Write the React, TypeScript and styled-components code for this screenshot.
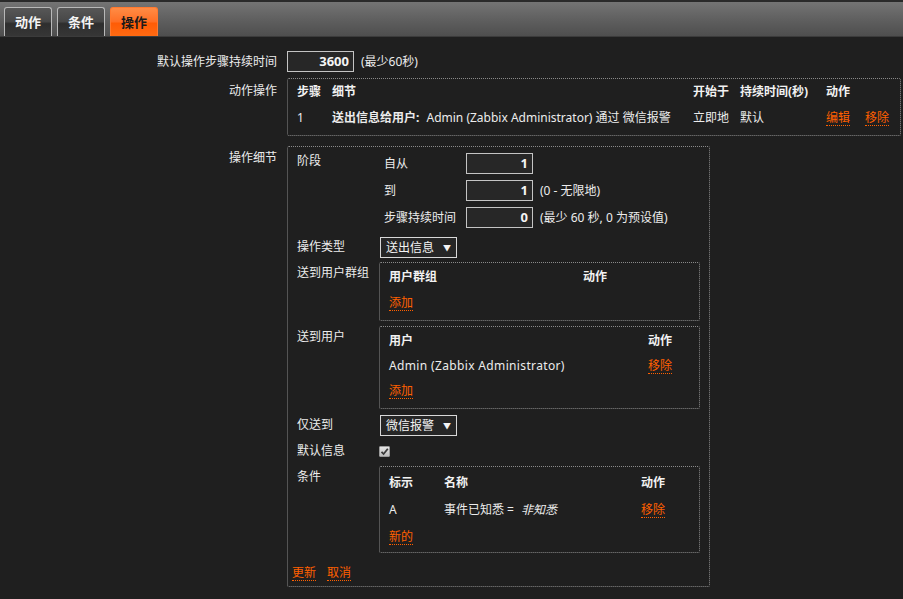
import React from 'react';
import styled, { createGlobalStyle } from 'styled-components';

const GlobalStyle = createGlobalStyle`
    html, body {
        margin: 0;
        padding: 0;
        background: #1f1f1f;
    }
    body {
        font-family: "Noto Sans", "Noto Sans CJK SC", sans-serif;
        font-size: 12px;
        line-height: 16px;
        color: #ececec;
    }
`;

const ORANGE = '#ff6000';

const App = (): JSX.Element => {
    return (
        <Page>
            <GlobalStyle />
            <TabBar>
                <Tab>动作</Tab>
                <Tab>条件</Tab>
                <Tab $active>操作</Tab>
            </TabBar>
            <Form>
                <FormRow $mt={0}>
                    <FormLabel $pt={3}>默认操作步骤持续时间</FormLabel>
                    <Inline>
                        <NumInput $width={67}>3600</NumInput>
                        <span>(最少60秒)</span>
                    </Inline>
                </FormRow>
                <FormRow $mt={6}>
                    <FormLabel $pt={5}>动作操作</FormLabel>
                    <Box $width={614}>
                        <OpsTable>
                            <Th>步骤</Th>
                            <Th>细节</Th>
                            <Th>开始于</Th>
                            <Th>持续时间(秒)</Th>
                            <Th>动作</Th>
                            <Td>1</Td>
                            <Td>
                                <b>送出信息给用户:</b> Admin (Zabbix Administrator) 通过 微信报警
                            </Td>
                            <Td>立即地</Td>
                            <Td>默认</Td>
                            <Td>
                                <Links>
                                    <Link>编辑</Link>
                                    <Link>移除</Link>
                                </Links>
                            </Td>
                        </OpsTable>
                    </Box>
                </FormRow>
                <FormRow $mt={10}>
                    <FormLabel $pt={4}>操作细节</FormLabel>
                    <DetailBox>
                        <DetailRow $mt={6}>
                            <DetailLabel $pt={0}>阶段</DetailLabel>
                            <StageGrid>
                                <SubLabel>自从</SubLabel>
                                <NumInput $width={67}>1</NumInput>
                                <SubLabel>到</SubLabel>
                                <Inline>
                                    <NumInput $width={67}>1</NumInput>
                                    <span>(0 - 无限地)</span>
                                </Inline>
                                <SubLabel>步骤持续时间</SubLabel>
                                <Inline>
                                    <NumInput $width={67}>0</NumInput>
                                    <span>(最少 60 秒, 0 为预设值)</span>
                                </Inline>
                            </StageGrid>
                        </DetailRow>
                        <DetailRow $mt={9}>
                            <DetailLabel $pt={2}>操作类型</DetailLabel>
                            <Select>
                                送出信息 <Arrow>▼</Arrow>
                            </Select>
                        </DetailRow>
                        <DetailRow $mt={4}>
                            <DetailLabel $pt={3}>送到用户群组</DetailLabel>
                            <InnerBox>
                                <InnerTable $cols="194px 1fr" $row={26} $pt={1} $pb={4}>
                                    <Th>用户群组</Th>
                                    <Th>动作</Th>
                                    <Td>
                                        <Link>添加</Link>
                                    </Td>
                                    <Td />
                                </InnerTable>
                            </InnerBox>
                        </DetailRow>
                        <DetailRow $mt={5}>
                            <DetailLabel $pt={3}>送到用户</DetailLabel>
                            <InnerBox>
                                <InnerTable $cols="259px 1fr" $row={25} $pt={1} $pb={5}>
                                    <Th>用户</Th>
                                    <Th>动作</Th>
                                    <Td $wide>Admin (Zabbix Administrator)</Td>
                                    <Td>
                                        <Link>移除</Link>
                                    </Td>
                                    <Td>
                                        <Link>添加</Link>
                                    </Td>
                                    <Td />
                                </InnerTable>
                            </InnerBox>
                        </DetailRow>
                        <DetailRow $mt={6}>
                            <DetailLabel $pt={2}>仅送到</DetailLabel>
                            <Select>
                                微信报警 <Arrow>▼</Arrow>
                            </Select>
                        </DetailRow>
                        <DetailRow $mt={5}>
                            <DetailLabel $pt={2}>默认信息</DetailLabel>
                            <CheckRow>
                                <Check>
                                    <svg width="9" height="9" viewBox="0 0 9 9">
                                        <path d="M1.5 4.8 L3.6 7 L7.8 1.8" fill="none" stroke="#3a3a3a" strokeWidth="1.8" />
                                    </svg>
                                </Check>
                            </CheckRow>
                        </DetailRow>
                        <DetailRow $mt={5}>
                            <DetailLabel $pt={3}>条件</DetailLabel>
                            <InnerBox>
                                <InnerTable $cols="55px 197px 1fr" $row={27} $pt={2} $pb={2}>
                                    <Th>标示</Th>
                                    <Th>名称</Th>
                                    <Th>动作</Th>
                                    <Td>A</Td>
                                    <Td>
                                        事件已知悉 = <i>非知悉</i>
                                    </Td>
                                    <Td>
                                        <Link>移除</Link>
                                    </Td>
                                    <Td>
                                        <Link>新的</Link>
                                    </Td>
                                    <Td />
                                    <Td />
                                </InnerTable>
                            </InnerBox>
                        </DetailRow>
                        <Buttons>
                            <Link>更新</Link>
                            <Link>取消</Link>
                        </Buttons>
                    </DetailBox>
                </FormRow>
            </Form>
        </Page>
    );
};

const Page = styled.div`
    min-height: 599px;
    background: #1f1f1f;
`;

const TabBar = styled.div`
    display: flex;
    align-items: flex-end;
    gap: 5px;
    height: 34px;
    padding-left: 4px;
    border-top: 2px solid #2a2a2a;
    border-bottom: 1px solid #3b3b3b;
    background: linear-gradient(#747474, #5e5e5e 55%, #4e4e4e);
`;

const Tab = styled.div<{ $active?: boolean }>`
    box-sizing: border-box;
    width: 48px;
    height: 29px;
    display: flex;
    align-items: center;
    justify-content: center;
    font-weight: bold;
    font-size: 13px;
    border: 1px solid ${({ $active }) => ($active ? '#ff7a30' : '#b8b8b8')};
    border-bottom: none;
    border-radius: 3px 3px 0 0;
    color: ${({ $active }) => ($active ? '#1a1a1a' : '#f4f4f4')};
    background: ${({ $active }) =>
        $active
            ? 'linear-gradient(#ff8c45, #ff7026 48%, #ff5c06 55%, #ff6a12)'
            : 'linear-gradient(#575757, #474747 48%, #2e2e2e 56%, #363636)'};
`;

const Form = styled.div`
    display: flex;
    flex-direction: column;
    padding-top: 14px;
`;

const FormRow = styled.div<{ $mt: number }>`
    display: grid;
    grid-template-columns: 277px auto;
    column-gap: 10px;
    align-items: start;
    margin-top: ${({ $mt }) => $mt}px;
`;

const FormLabel = styled.div<{ $pt: number }>`
    text-align: right;
    padding-top: ${({ $pt }) => $pt}px;
    white-space: nowrap;
`;

const Inline = styled.div`
    display: flex;
    align-items: center;
    gap: 7px;
    white-space: nowrap;
`;

const NumInput = styled.div<{ $width: number }>`
    box-sizing: border-box;
    width: ${({ $width }) => $width}px;
    height: 21px;
    padding: 0 4px;
    border: 1px solid #c4c4c4;
    background: #272727;
    color: #f4f4f4;
    font-weight: bold;
    font-size: 13px;
    text-align: right;
    line-height: 19px;
`;

const Box = styled.div<{ $width: number }>`
    box-sizing: border-box;
    width: ${({ $width }) => $width}px;
    border: 1px dotted #8a8a8a;
    border-radius: 2px;
`;

const OpsTable = styled.div`
    display: grid;
    grid-template-columns: 35px 361px 47px 86px 1fr;
    grid-auto-rows: 26px;
    padding: 0 0 4px 9px;
    white-space: nowrap;
`;

const Th = styled.div`
    display: flex;
    align-items: center;
    font-weight: bold;
    color: #f2f2f2;
`;

const Td = styled.div<{ $wide?: boolean }>`
    display: flex;
    align-items: center;
    gap: 4px;
    white-space: pre;
    letter-spacing: ${({ $wide }) => ($wide ? '0.35px' : 'normal')};
    b {
        font-weight: bold;
    }
    i {
        font-style: italic;
    }
`;

const Links = styled.div`
    display: flex;
    gap: 15px;
`;

const Link = styled.span`
    color: ${ORANGE};
    border-bottom: 1px dotted ${ORANGE};
    line-height: 15px;
    cursor: pointer;
`;

const DetailBox = styled.div`
    box-sizing: border-box;
    width: 423px;
    display: flex;
    flex-direction: column;
    padding: 0 0 3px 4px;
    border: 1px dotted #8a8a8a;
    border-radius: 2px;
`;

const DetailRow = styled.div<{ $mt: number }>`
    display: grid;
    grid-template-columns: 87px auto;
    align-items: start;
    margin-top: ${({ $mt }) => $mt}px;
`;

const DetailLabel = styled.div<{ $pt: number }>`
    padding: ${({ $pt }) => $pt}px 0 0 5px;
    white-space: nowrap;
`;

const StageGrid = styled.div`
    display: grid;
    grid-template-columns: 82px auto;
    row-gap: 6px;
    align-items: center;
    padding-left: 5px;
`;

const SubLabel = styled.div`
    white-space: nowrap;
`;

const Select = styled.div`
    box-sizing: border-box;
    width: 77px;
    height: 21px;
    margin-left: 1px;
    padding: 0 5px;
    display: flex;
    align-items: center;
    justify-content: space-between;
    border: 1px solid #d8d8d8;
    background: #262626;
    color: #f4f4f4;
`;

const Arrow = styled.span`
    font-size: 8px;
    line-height: 8px;
`;

const CheckRow = styled.div`
    height: 20px;
    display: flex;
    align-items: center;
`;

const Check = styled.span`
    box-sizing: border-box;
    width: 11px;
    height: 11px;
    display: flex;
    align-items: center;
    justify-content: center;
    border: 1px solid #9a9a9a;
    border-radius: 1px;
    background: linear-gradient(#e6e6e6, #bdbdbd);
`;

const InnerBox = styled.div`
    box-sizing: border-box;
    width: 321px;
    border: 1px dotted #8a8a8a;
    border-radius: 2px;
`;

const InnerTable = styled.div<{ $cols: string; $row: number; $pt: number; $pb: number }>`
    display: grid;
    grid-template-columns: ${({ $cols }) => $cols};
    grid-auto-rows: ${({ $row }) => $row}px;
    padding: ${({ $pt }) => $pt}px 0 ${({ $pb }) => $pb}px 9px;
    white-space: nowrap;
`;

const Buttons = styled.div`
    display: flex;
    gap: 11px;
    height: 20px;
    align-items: center;
    margin-top: 10px;
`;

export default App;
